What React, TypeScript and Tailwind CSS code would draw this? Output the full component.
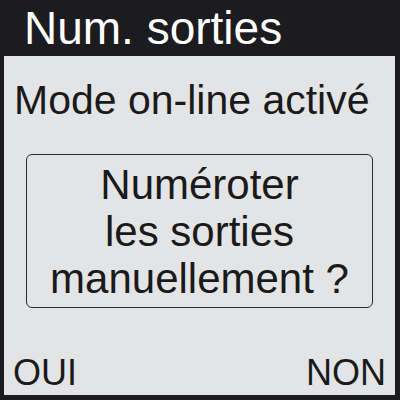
export default function App() {
  return (
    <div
      className="flex h-[400px] w-[400px] flex-col bg-[#1c1b1f] pb-[5px] pl-[4px] pr-[5px]"
      style={{ fontFamily: '"Liberation Sans", Arial, sans-serif' }}
    >
      <div className="flex h-[56px] shrink-0 items-center pl-[20px] text-[46px] leading-[56px] text-white">
        Num. sorties
      </div>
      <div className="flex grow flex-col bg-[#e3e4e6] text-[#1a1a1a]">
        <div className="mt-[24px] pl-[10px] text-[41px] leading-[41px]">Mode on-line activé</div>
        <div className="mx-auto mt-[33px] flex h-[154px] w-[347px] flex-col items-center justify-center rounded-[6px] border-[1.5px] border-[#2a2a2c] text-[42px] leading-[47px]">
          <div>Numéroter</div>
          <div>les sorties</div>
          <div>manuellement ?</div>
        </div>
        <div className="mt-auto flex justify-between px-[9px] pb-[4px] text-[36px] leading-[36px]">
          <span>OUI</span>
          <span>NON</span>
        </div>
      </div>
    </div>
  );
}
